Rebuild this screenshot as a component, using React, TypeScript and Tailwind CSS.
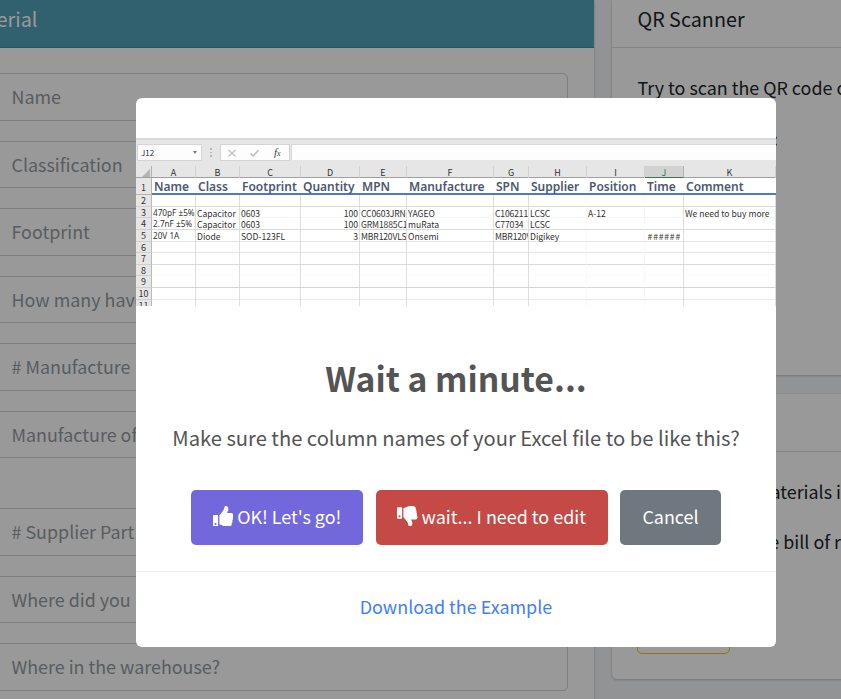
import type { ReactNode } from "react";
import { FaThumbsDown, FaThumbsUp } from "react-icons/fa";

const fields = [
  "Name",
  "Classification",
  "Footprint",
  "How many have",
  "# Manufacture",
  "Manufacture of",
  "# Supplier Part",
  "Where did you",
  "Where in the warehouse?",
];

const letters = ["A", "B", "C", "D", "E", "F", "G", "H", "I", "J", "K"];
const titles = ["Name", "Class", "Footprint", "Quantity", "MPN", "Manufacture", "SPN", "Supplier", "Position", "Time", "Comment"];

const empty = ["", "", "", "", "", "", "", "", "", "", ""];
const rows: { h: string; line: string; cells: string[] }[] = [
  { h: "h-3", line: "border-b-[#dadada]", cells: empty },
  { h: "h-[11px]", line: "border-b-[#f6f6f6]", cells: ["470pF ±5%", "Capacitor", "0603", "100", "CC0603JRNI", "YAGEO", "C106211", "LCSC", "A-12", "", "We need to buy more"] },
  { h: "h-3", line: "border-b-[#dadada]", cells: ["2.7nF ±5% 5", "Capacitor", "0603", "100", "GRM1885C1", "muRata", "C77034", "LCSC", "", "", ""] },
  { h: "h-3", line: "border-b-[#e6e6e6]", cells: ["20V 1A", "Diode", "SOD-123FL", "3", "MBR120VLS", "Onsemi", "MBR120V", "Digikey", "", "######", ""] },
  { h: "h-[11px]", line: "border-b-[#e6e6e6]", cells: empty },
  { h: "h-3", line: "border-b-[#dadada]", cells: empty },
  { h: "h-[11px]", line: "border-b-[#fafafa]", cells: empty },
  { h: "h-3", line: "border-b-[#d6d6d6]", cells: empty },
  { h: "h-3", line: "border-b-[#e8e8e8]", cells: empty },
  { h: "h-3", line: "border-b-[#e8e8e8]", cells: empty },
];

const cols = "grid grid-cols-[16px_44px_44px_61px_59px_47px_87px_35px_58px_58px_39px_92px]";

function Sheet() {
  return (
    <div className="h-[168px] overflow-hidden bg-white font-['Noto_Sans_CJK_SC',sans-serif] text-[8.6px] text-[#333]">
      <div className="flex h-[28px] items-start border-t-2 border-[#d8d8d8] bg-[#e6e6e6] pt-1">
        <div className="ml-[1px] flex h-[17px] w-[65px] items-center justify-between border border-[#d4d4d4] bg-[#fdfdfd] pl-[3px] pr-1">
          <span className="text-[8px] leading-none">J12</span>
          <span className="size-0 border-x-[2.5px] border-t-[3px] border-x-transparent border-t-[#777]" />
        </div>
        <div className="ml-2 mt-1 flex w-[2px] flex-col gap-[2px]">
          <i className="h-[1.5px] bg-[#b8b8b8]" />
          <i className="h-[1.5px] bg-[#b8b8b8]" />
          <i className="h-[1.5px] bg-[#b8b8b8]" />
        </div>
        <div className="ml-2 flex h-[17px] w-[70px] items-center border border-[#d4d4d4] bg-[#fdfdfd]">
          <svg className="ml-[7px] size-2" viewBox="0 0 8 8" fill="none" stroke="#c4c4c4" strokeWidth="1.3"><path d="M.5 1l7 6.5M7.5 1l-7 6.5" /></svg>
          <svg className="ml-[14px] h-2 w-[9px]" viewBox="0 0 9 8" fill="none" stroke="#c4c4c4" strokeWidth="1.7"><path d="M.5 4.5l2.8 2.5L8.5 1" /></svg>
          <span className="ml-[15px] font-['Liberation_Serif',serif] text-[11px] italic leading-none text-[#444]">f<span className="text-[8px]">x</span></span>
        </div>
        <div className="ml-[1px] h-[16px] flex-1 border-l border-t border-[#d8d8d8] bg-[#fdfdfd]" />
      </div>
      <div className={`${cols} h-[12px] border-b border-[#a0a0a0] bg-[#e6e6e6]`}>
        <div className="flex items-end justify-end border-r border-[#b0b0b0] pb-[1px] pr-[1px]">
          <span className="size-0 border-b-[8px] border-l-[8px] border-b-[#b4b4b4] border-l-transparent" />
        </div>
        {letters.map((l) => (
          <div
            key={l}
            className={`h-[12px] border-r text-center text-[9px] leading-[13px] ${l === "J" ? "border-b border-[#b5b5b5] border-b-[#407050] bg-[#d2d2d2] text-[#407050]" : "border-[#d0d0d0]"}`}
          >
            {l}
          </div>
        ))}
      </div>
      <div className={`${cols} h-[17px]`}>
        <div className="h-[17px] border-b border-r border-[#b4b4b4] bg-[#e6e6e6] pt-[4px] text-center text-[9px] leading-[12px]">1</div>
        {titles.map((t) => (
          <div key={t} className="h-[17px] whitespace-nowrap border-b-2 border-[#5078c8] pl-[2px] font-['Noto_Sans',sans-serif] text-[12px] font-semibold leading-[17px] text-[#4c5870]">
            {t}
          </div>
        ))}
      </div>
      {rows.map((r, i) => (
        <div key={i} className={`${cols} ${r.h}`}>
          <div className={`${r.h} border-b border-r border-[#b9b9b9] border-b-[#cfcfcf] bg-[#e6e6e6] text-center text-[9px] leading-[12px]`}>{i + 2}</div>
          {r.cells.map((c, j) => (
            <div
              key={j}
              className={`${r.h} overflow-x-clip overflow-y-visible whitespace-nowrap border-b border-r ${r.line} ${j === 7 || j === 8 ? "border-r-[#f7f7f7]" : "border-r-[#dedede]"} pl-[1px] leading-[12px] ${j === 0 ? "font-['Noto_Sans',sans-serif] text-[8.2px]" : ""} ${j === 4 || j === 6 ? "tracking-[-0.15px]" : ""} ${j === 3 ? "pr-[1px] text-right" : ""} ${j === 9 ? "pr-[2px] text-right tracking-[0.8px]" : ""}`}
            >
              {c}
            </div>
          ))}
        </div>
      ))}
    </div>
  );
}

function ModalButton({ className, children }: { className: string; children: ReactNode }) {
  return (
    <button className={`flex h-[55px] items-center justify-center gap-1 whitespace-nowrap rounded-[5px] pb-[3px] text-[17.95px] text-white ${className}`}>
      {children}
    </button>
  );
}

const card = "bg-white shadow-[0_0_1px_rgba(0,0,0,.125),0_1px_3px_rgba(0,0,0,.2)]";

export default function App() {
  return (
    <div className="relative h-[699px] w-[841px] overflow-hidden bg-[#f4f6f9] font-['Noto_Sans_CJK_SC',sans-serif] text-[17.9px] leading-[30px] text-[#212529]">
      <div className="flex h-full gap-[18px]">
        <section className={`h-full w-[594px] shrink-0 ${card}`}>
          <header className="h-12 border-b border-[#438ba2] bg-[#52a0b7] pt-1 text-[19.8px] text-white">
            <span className="-ml-[37.5px] block">Material</span>
          </header>
          <div className="flex flex-col gap-5 pr-[26px] pt-[25.25px]">
            {fields.map((f, i) => (
              <div
                key={f}
                className={`-ml-3 flex h-[47.5px] shrink-0 items-center rounded-[5px] border border-[#ced4da] pb-[2px] pl-[22.5px] text-[17.9px] text-[#939ba2] ${i === 6 ? "mt-[30px]" : ""}`}
              >
                {f}
              </div>
            ))}
          </div>
        </section>

        <div className="flex w-[260px] shrink-0 flex-col gap-[19px]">
          <section className={`h-[375px] shrink-0 rounded-b-[5px] ${card}`}>
            <header className="h-12 border-b border-[#dfdfdf] pl-[25.5px] pt-1 text-[19.75px]">QR Scanner</header>
            <p className="whitespace-nowrap pl-[25.5px] pt-6">Try to scan the QR code on</p>
            <p className="w-[166px] pt-[21px] text-right">code:</p>
          </section>
          <section className={`h-[285px] shrink-0 rounded-[5px] ${card}`}>
            <header className="h-[57.5px] border-b border-[#dfdfdf]" />
            <p className="w-[229px] whitespace-nowrap pt-6 text-right">materials i</p>
            <p className="w-[229px] whitespace-nowrap pt-5 text-right">the bill of r</p>
            <div className="ml-[25px] mt-[50px] h-[48px] w-[93px] rounded-[5px] border border-[#ffc107]" />
          </section>
        </div>
      </div>

      <div className="absolute inset-0 flex items-start justify-center bg-black/40 pl-[71px] pt-[98px]">
        <div className="h-[549px] w-[640px] shrink-0 overflow-hidden rounded-[6px] bg-white pt-10">
          <Sheet />
          <h2 className="mt-[47px] text-center text-[33.7px] font-bold leading-[50px] text-[#545454]">Wait a minute...</h2>
          <p className="mt-5 text-center text-[20.17px] leading-[30px] text-[#545454]">Make sure the column names of your Excel file to be like this?</p>
          <div className="mt-[37px] flex pl-[55px]">
            <ModalButton className="w-[172px] bg-[#7367dc]">
              <FaThumbsUp className="size-[20.5px]" />
              OK! Let's go!
            </ModalButton>
            <ModalButton className="ml-[13px] w-[232px] bg-[#c54a46] pr-[1px]">
              <FaThumbsDown className="size-[20.5px]" />
              wait... I need to edit
            </ModalButton>
            <ModalButton className="ml-3 w-[101px] bg-[#70787f]">Cancel</ModalButton>
          </div>
          <div className="mt-[26px] border-t border-[#eee] pt-[19px] text-center text-[17.95px] text-[#437ef7]">Download the Example</div>
        </div>
      </div>
    </div>
  );
}
